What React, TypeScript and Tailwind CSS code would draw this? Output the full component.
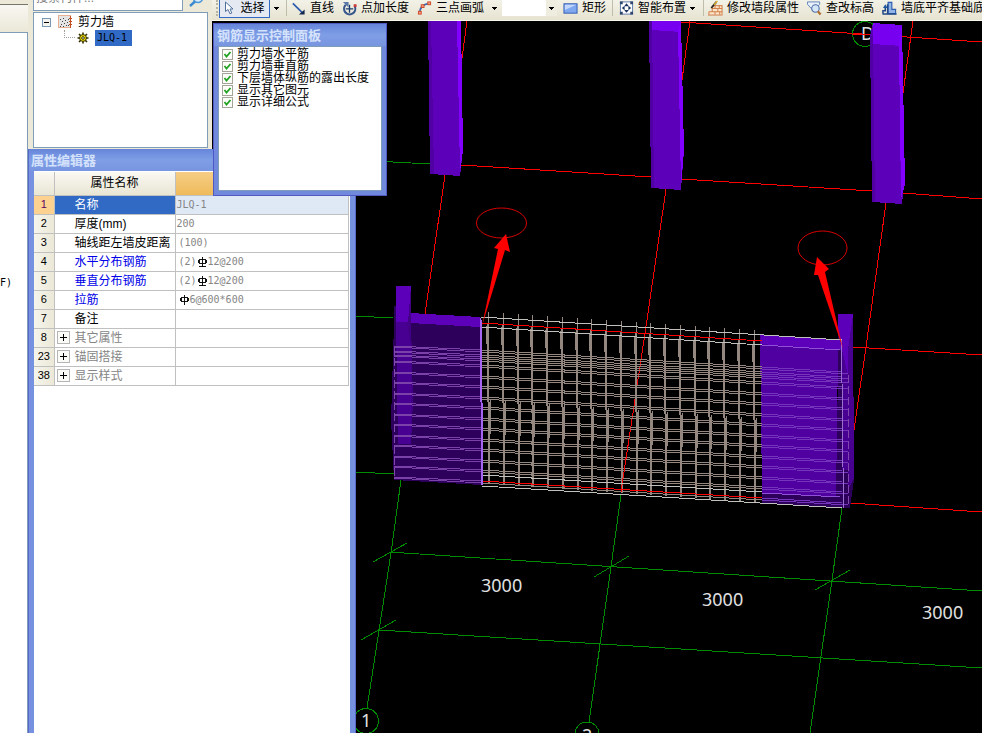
import type { ReactNode } from "react";

const PROPS: { n: number; name: string; value?: string; bar?: "plain" | "ribbed"; count?: string; kind?: "blue" | "group" | "sel" }[] = [
  { n: 1, name: "名称", value: "JLQ-1", kind: "sel" },
  { n: 2, name: "厚度(mm)", value: "200" },
  { n: 3, name: "轴线距左墙皮距离", count: "(100)" },
  { n: 4, name: "水平分布钢筋", count: "(2)", bar: "ribbed", value: "12@200", kind: "blue" },
  { n: 5, name: "垂直分布钢筋", count: "(2)", bar: "ribbed", value: "12@200", kind: "blue" },
  { n: 6, name: "拉筋", bar: "plain", value: "6@600*600", kind: "blue" },
  { n: 7, name: "备注" },
  { n: 8, name: "其它属性", kind: "group" },
  { n: 23, name: "锚固搭接", kind: "group" },
  { n: 38, name: "显示样式", kind: "group" },
];

const OPTIONS = ["剪力墙水平筋", "剪力墙垂直筋", "下层墙体纵筋的露出长度", "显示其它图元", "显示详细公式"];

function Icon({ children }: { children: ReactNode }) {
  return (
    <svg viewBox="0 0 16 16" className="w-[15px] h-4 shrink-0" fill="none">
      {children}
    </svg>
  );
}

function Tool({ icon, label }: { icon: ReactNode; label: string }) {
  return (
    <button type="button" className="h-4 px-1 flex items-center gap-1 shrink-0 whitespace-nowrap">
      <Icon>{icon}</Icon>
      <span>{label}</span>
    </button>
  );
}

function Caret({ className, label }: { className: string; label: string }) {
  return (
    <button type="button" aria-label={label} className={`h-4 flex items-center shrink-0 ${className}`}>
      <svg viewBox="0 0 5 3" className="w-[5px] h-[3px]" shapeRendering="crispEdges">
        <path d="M0 0H5V1H4V2H3V3H2V2H1V1H0Z" fill="#000" />
      </svg>
    </button>
  );
}

function Toolbar() {
  return (
    <header className="h-[21px] shrink-0 flex items-start overflow-hidden bg-linear-to-b from-[#f3f2e8] to-[#e6e3d0] border-b border-[#f8f8ec]">
      <span className="w-[2px] h-4 ml-1 mr-px shrink-0 border-l-2 border-dotted border-[#b8b5a2]" />
      <button type="button" className="h-[18px] w-[51px] pb-0.5 flex items-center justify-center gap-1.5 shrink-0 border border-t-0 border-[#316ac5] bg-[#e5eaf2] whitespace-nowrap">
        <svg viewBox="0 0 10 14" className="w-[10px] h-[14px]">
          <path d="M1.5 1V10.5L4 8.5L6 12.8L7.8 12L6 8H9Z" fill="#fff" stroke="#50709c" />
        </svg>
        <span>选择</span>
      </button>
      <Caret label="选择方式" className="w-4 pl-1" />
      <span className="w-px h-4 shrink-0 bg-[#c0bdaa]" />
      <Tool
        label="直线"
        icon={
          <>
            <path d="M2 3L12 13" stroke="#2c5cae" strokeWidth="1.8" />
            <path d="M14.5 9.5V15H8.5L10.5 13L12.5 11.5Z" fill="#14284c" />
          </>
        }
      />
      <Tool
        label="点加长度"
        icon={
          <>
            <path d="M4 4.5A6 6 0 1 0 13.5 6" stroke="#35558c" strokeWidth="2.2" />
            <path d="M8 4.5V13M4 9H12" stroke="#1c3c70" strokeWidth="1.4" />
            <path d="M1 1.5H7V7.5Z" fill="#5878a8" />
            <rect x="12.5" y="4" width="3" height="3" fill="#c83838" />
          </>
        }
      />
      <Tool
        label="三点画弧"
        icon={
          <>
            <path d="M3 13C3 8 6 4 13 3" stroke="#3468b4" strokeWidth="1.8" />
            <rect x="1.5" y="11.5" width="3" height="3" fill="#f4a080" stroke="#d04828" />
            <rect x="4.5" y="4.5" width="3" height="3" fill="#f4a080" stroke="#d04828" />
            <rect x="11.5" y="1.5" width="3" height="3" fill="#f4a080" stroke="#d04828" />
          </>
        }
      />
      <Caret label="画弧方式" className="w-3 pl-1" />
      <div className="w-[55px] h-4 ml-0.5 shrink-0 flex bg-white">
        <select aria-label="画弧参数" className="flex-1 min-w-0 appearance-none bg-white">
          <option></option>
        </select>
        <span className="w-[11px] bg-[#efeddf] flex items-center justify-center">
          <svg viewBox="0 0 5 3" className="w-[5px] h-[3px]" shapeRendering="crispEdges">
            <path d="M0 0H5V1H4V2H3V3H2V2H1V1H0Z" fill="#000" />
          </svg>
        </span>
      </div>
      <span className="w-0.5 shrink-0" />
      <Tool
        label="矩形"
        icon={
          <>
            <rect x="1" y="3.5" width="14" height="10" fill="#7fa8f0" stroke="#3058b0" />
            <path d="M2 4.5H14L2 10Z" fill="#c4d8fb" />
          </>
        }
      />
      <span className="w-px h-4 mx-0.5 shrink-0 bg-[#c0bdaa]" />
      <Tool
        label="智能布置"
        icon={
          <>
            <rect x="1.5" y="1.5" width="13" height="13" fill="#fff" stroke="#5878a8" />
            <path d="M1 1H4V4H1ZM12 1H15V4H12ZM1 12H4V15H1ZM12 12H15V15H12Z" fill="#304870" />
            <path d="M8 3L10.5 6H5.5ZM8 13L10.5 10H5.5ZM3 8L6 5.5V10.5ZM13 8L10 10.5V5.5Z" fill="#18335f" />
          </>
        }
      />
      <Caret label="布置方式" className="w-3" />
      <span className="w-px h-4 ml-px shrink-0 bg-[#c0bdaa]" />
      <Tool
        label="修改墙段属性"
        icon={
          <>
            <path d="M1 15V11H4V8H7V5H15V15Z" fill="#fbe6cc" />
            <path d="M0 15.5H15.5M1 12H15M4 8.5H15M7 5.5H15M4.5 12V8M7.5 8V5M10.5 9V12M7.5 12V15M12.5 12V15M15 5V15M12 5V8M1 15V12" stroke="#d07840" />
            <path d="M3.5 8L9 1.5" stroke="#302820" strokeWidth="2" />
            <path d="M6.5 4.5L10 0.5" stroke="#e0b030" strokeWidth="1.4" />
          </>
        }
      />
      <Tool
        label="查改标高"
        icon={
          <>
            <path d="M0.5 1.5H13.5V4L10 8H4L0.5 4Z" fill="#e8f0fb" stroke="#6080b4" />
            <circle cx="9" cy="8.5" r="4" fill="#d4e6f8" stroke="#5070a8" strokeWidth="1.2" />
            <path d="M11.5 11.5L14.5 15" stroke="#b07030" strokeWidth="2.4" />
          </>
        }
      />
      <Tool
        label="墙底平齐基础底"
        icon={
          <>
            <path d="M6.5 2H10.5V9.5H14.5V14H6.5Z" fill="#90b4e8" stroke="#2c5cae" strokeWidth="1.2" />
            <path d="M1 14V11H3.5V7M0.5 14.5H15.5M6 14V4" stroke="#204888" strokeWidth="1.6" />
            <path d="M1 8L3.5 4L6 8Z" fill="#2058a0" />
          </>
        }
      />
    </header>
  );
}

function TreePanel() {
  return (
    <div className="flex-1 flex flex-col pl-[5px] pr-1 bg-[#ece9d8]">
      <div className="h-[26px] -mt-[15px] flex shrink-0">
        <input
          type="text"
          aria-label="搜索构件"
          placeholder="搜索构件..."
          className="flex-1 min-w-0 px-0.5 bg-white border border-[#7f9db9] placeholder:text-[#808080]"
        />
        <button type="button" aria-label="搜索" className="w-[25px] shrink-0 pb-1 flex items-end justify-center">
          <svg viewBox="0 0 16 16" className="w-4 h-4" fill="none">
            <circle cx="10" cy="7" r="4.5" fill="#d8ecfb" stroke="#4c9ad8" strokeWidth="1.6" />
            <path d="M7 10.5L2 15" stroke="#3c8ad0" strokeWidth="2.4" />
          </svg>
        </button>
      </div>
      <div className="flex-1 mt-px pl-2 pt-px bg-white border border-[#7f9db9]">
        <div className="h-4 flex items-center">
          <svg viewBox="0 0 9 9" className="w-[9px] h-[9px]" shapeRendering="crispEdges">
            <rect x="0.5" y="0.5" width="8" height="8" fill="#f4f3ee" stroke="#7898b5" />
            <path d="M2 4.5H7" stroke="#000" />
          </svg>
          <svg viewBox="0 0 14 14" className="w-[14px] h-[14px] ml-[7px]" shapeRendering="crispEdges">
            <rect x="0.5" y="0.5" width="12" height="12" fill="#e4e4e4" stroke="#e8b090" />
            <path d="M2 4.5h1M5 3.5h1M4 6.5h1M7 5.5h1M9 7.5h1M3 9.5h1M6 8.5h1M8 10.5h1M5 11.5h1M10 4.5h1M10 10.5h1M2 11.5h1" stroke="#444" />
            <path d="M12.5 1V13M11 3.5H14M11 6.5H14M11 9.5H14" stroke="#c05020" />
          </svg>
          <span className="ml-1.5">剪力墙</span>
        </div>
        <div className="h-4 flex items-center pl-[22px]">
          <span className="w-[11px] h-2 mb-2 border-l border-b border-dotted border-[#a0a0a0]" />
          <svg viewBox="0 0 12 12" className="w-3 h-3 ml-0.5">
            <path d="M6 0.5V11.5M0.5 6H11.5M2 2L10 10M10 2L2 10" stroke="#302c00" strokeWidth="1.6" />
            <circle cx="6" cy="6" r="3.4" fill="#f8e800" stroke="#302c00" />
            <circle cx="6" cy="6" r="1.3" fill="#fff" stroke="#302c00" />
          </svg>
          <span className="w-[37px] h-4 ml-1.5 pl-0.5 flex items-center bg-[#316ac5] text-[10px] font-['DejaVu_Sans_Mono',monospace]">JLQ-1</span>
        </div>
      </div>
    </div>
  );
}

function RebarMark({ ribbed }: { ribbed: boolean }) {
  return (
    <svg viewBox="0 0 12 12" className="w-[11px] h-3 shrink-0" fill="none" stroke="#000" shapeRendering="crispEdges">
      <path d="M2.5 3.5H9.5V7.5H2.5ZM6 1V11" />
      <path d="M1.5 4V7M10.5 4V7" />
      {ribbed && <path d="M2 10.5H10" />}
    </svg>
  );
}

function PropertyEditor() {
  return (
    <section className="absolute z-10 left-7 top-[149px] bottom-0 w-[328px] flex flex-col px-[5px] bg-[#7591e0] border-x border-[#5a68cc]">
      <h2 className="h-[22px] -mx-[5px] pl-0.5 pt-px flex items-center shrink-0 text-[13px] font-bold text-[#d5e2fb] bg-linear-to-b from-[#6685da] via-[#7f9ee6] to-[#7895e0]">
        属性编辑器
      </h2>
      <div className="flex-1 bg-white pr-px pt-px">
        <table className="w-full table-fixed border-collapse">
          <thead>
            <tr className="h-[23px] bg-linear-to-b from-[#faf9f3] to-[#e9e6d4]">
              <th className="w-5 border-r border-b border-[#c0c0c0]"></th>
              <th className="w-[121px] p-0 border-r border-b border-[#c0c0c0] font-normal">属性名称</th>
              <th className="p-0 border-r border-b border-[#c0c0c0] font-normal bg-linear-to-b from-[#f5cd85] to-[#efbb5a]">属性值</th>
            </tr>
          </thead>
          <tbody>
            {PROPS.map((p) => (
              <tr key={p.n} className="h-[19px]">
                <th className={`p-0 border-r border-b border-[#c0c0c0] font-normal text-[11px] leading-none ${p.kind === "sel" ? "bg-[#fdd190] text-[#600060]" : "bg-linear-to-r from-[#f6f5ec] to-[#ebe8d7]"}`}>
                  {p.n}
                </th>
                <td className={`p-0 border-r border-b border-[#c0c0c0] leading-none ${p.kind === "sel" ? "bg-[#316ac5] text-white" : p.kind === "blue" ? "text-[#0000e8]" : p.kind === "group" ? "text-[#858585]" : ""}`}>
                  <div className="flex items-center">
                    <span className="w-5 flex justify-start pl-0.5">
                      {p.kind === "group" && (
                        <button type="button" aria-label={`展开${p.name}`}>
                          <svg viewBox="0 0 13 13" className="block w-[13px] h-[13px]" shapeRendering="crispEdges">
                            <rect x="0.5" y="0.5" width="12" height="12" fill="#fafaf6" stroke="#b5b5b5" />
                            <path d="M3 6.5H10M6.5 3V10" stroke="#000" />
                          </svg>
                        </button>
                      )}
                    </span>
                    <span className="whitespace-nowrap">{p.name}</span>
                  </div>
                </td>
                <td className={`p-0 border-r border-b border-[#c0c0c0] leading-none text-[10px] text-[#858585] font-['DejaVu_Sans_Mono',monospace] ${p.kind === "sel" ? "bg-[#dfe9f6]" : ""}`}>
                  <div className={`flex items-center ${p.count || p.bar ? "pl-[3px]" : "pl-px"}`}>
                    {p.count}
                    {p.bar && <RebarMark ribbed={p.bar === "ribbed"} />}
                    {p.value}
                  </div>
                </td>
              </tr>
            ))}
          </tbody>
        </table>
      </div>
    </section>
  );
}

function DisplayPanel() {
  return (
    <section className="absolute z-20 left-[213px] top-[23px] w-[174px] h-[173px] flex flex-col px-1 pb-1 bg-[#7189dc] border border-[#5058c4]">
      <h2 className="h-[22px] -mx-1 pl-[3px] pt-0.5 flex items-center shrink-0 text-[13px] font-bold text-[#d5e2fb] bg-linear-to-b from-[#6685da] via-[#7f9ee6] to-[#7895e0]">
        钢筋显示控制面板
      </h2>
      <div className="flex-1 pl-[3px] pt-px bg-white border border-[#7f9db9]">
        {OPTIONS.map((o) => (
          <label key={o} className="h-3 flex items-center gap-1 leading-3 whitespace-nowrap">
            <span className="grid shrink-0">
              <input type="checkbox" defaultChecked className="peer [grid-area:1/1] appearance-none w-[11px] h-[11px] m-0 bg-[#fdfdfa] border border-[#a5a498]" />
              <svg viewBox="0 0 11 11" className="[grid-area:1/1] w-[11px] h-[11px] invisible peer-checked:visible pointer-events-none" fill="none">
                <path d="M2.5 5L4.5 7.5L8.5 3" stroke="#21a121" strokeWidth="1.8" />
              </svg>
            </span>
            {o}
          </label>
        ))}
      </div>
    </section>
  );
}

// Axis grid, [x1, y1, x2, y2] in scene units
const GREEN = [
  [355, 160, 430, 164], [355, 316, 393, 318], [355, 472, 394, 474],
  [389, 552, 982, 591], [379, 630, 982, 668],
  [401, 480, 391, 553], [391, 553, 367, 708],
  [621, 495, 611, 567], [611, 567, 589, 722],
  [842, 508, 832, 580], [832, 580, 810, 733],
  [373, 562, 407, 543], [361, 640, 396, 620], [594, 577, 629, 556], [815, 590, 850, 570],
];
const RED = [
  [681, 22, 982, 42], [461, 165, 651, 177], [681, 179, 872, 191], [903, 193, 982, 199],
  [853, 347, 982, 355], [850, 503, 982, 512],
  [467, 21, 461, 66], [445, 175, 425, 314],
  [690, 21, 682, 80], [666, 189, 647, 320], [647, 320, 621, 492],
  [913, 21, 903, 93], [886, 203, 866, 347], [866, 347, 854, 430],
];
const BARS = Array.from({ length: 19 }, (_, i) => i);
const LAYERS = [346, 351, 355, ...Array.from({ length: 12 }, (_, i) => 361 + Math.round(i * 10.5))];

function segments(list: number[][]) {
  return list.map(([a, b, c, d]) => `M${a} ${b}L${c} ${d}`).join("");
}

function Scene() {
  return (
    <svg viewBox="212 21 770 712" preserveAspectRatio="xMinYMin slice" className="block w-full h-full bg-black" fill="none">
      <g shapeRendering="crispEdges">
        <path d={segments(GREEN)} stroke="#008c00" />
        <path d={segments(RED)} stroke="#ff0000" />
        <circle cx="366" cy="721" r="12.5" stroke="#008c00" />
        <circle cx="587" cy="734" r="12" stroke="#008c00" />
        <circle cx="865" cy="34" r="12.5" stroke="#008c00" />
      </g>
      <g className="font-['Noto_Sans',sans-serif] text-[18px]" fill="#e0e0e0">
        <text x="481" y="592">3000</text>
        <text x="702" y="606">3000</text>
        <text x="922" y="619">3000</text>
        <text x="361" y="727">1</text>
        <text x="582" y="742">2</text>
        <text x="861" y="40">D</text>
      </g>

      {/* columns at the back */}
      <g shapeRendering="crispEdges">
        <path d="M852 34H872" stroke="#ff0000" />
        <path d="M428 21H461L463 150L460 176L430 174Z" fill="#5c00ba" />
        <path d="M428 21H431L434 174H430Z" fill="#5000a2" />
        <path d="M457 21H461L463 150L460 172Z" fill="#8200ff" />
        <path d="M650 21H681L684 150L681 190L651 188Z" fill="#5c00ba" />
        <path d="M649 21H652L654 188H651Z" fill="#5000a2" />
        <path d="M652 21H681V32L652 30Z" fill="#7800f0" />
        <path d="M678 31L681 21L684 150L681 186Z" fill="#8200ff" />
        <path d="M870 36L873 23L902 25L904 185L902 204L872 202Z" fill="#5c00ba" />
        <path d="M870 36L873 36L875 202H872Z" fill="#5000a2" />
        <path d="M873 23L902 25V46L873 44Z" fill="#7800f0" />
        <path d="M899 46L902 25L905 184L901 199Z" fill="#8200ff" />
      </g>

      {/* left end of the wall */}
      <g shapeRendering="crispEdges">
        <path d="M395 290L396 322H411V323L480 327L482 485L394 480L391 420Z" fill="#2d005c" />
        <path d="M410 313L480 317V327L410 323Z" fill="#5c00ba" />
        <path d="M411 286L407 322L411 444L413 400L411 322Z" fill="#430086" />
        <path d="M396 322H407L411 350V444H398Z" fill="#480092" />
        <path d="M396 286H411L408 322H396Z" fill="#5c00ba" />
      </g>

      {/* right end */}
      <g shapeRendering="crispEdges">
        <path d="M838 314H853V430L854 480L850 508L762 503V493L838 400Z" fill="#2d005c" />
        <path d="M760 335L841 340L838 350L836 497L762 493Z" fill="#5000a0" />
        <path d="M761 335L841 340V350L761 344Z" fill="#5c00ba" />
        <path d="M838 314H853L848 350V375L842 350L838 330Z" fill="#5c00ba" />
        <path d="M842 350L848 375V470H842Z" fill="#480092" />
        <path d="M853 314L848 350V490L854 478Z" fill="#480090" />
      </g>

      {/* horizontal bars: anchored ends show through the wall body */}
      <g shapeRendering="crispEdges">
        {LAYERS.map((y) => (
          <g key={y}>
            <path d={`M394 ${y}L482 ${y + 4}M394 ${y + 1}L482 ${y + 6}`} stroke="#7a42a8" />
            <path d={`M482 ${y + 4}L762 ${y + 21}M482 ${y + 6}L762 ${y + 23}`} stroke="#94877f" />
            <path d={`M762 ${y + 21}L842 ${y + 26}M762 ${y + 23}L848 ${y + 28}`} stroke="#7434bc" />
          </g>
        ))}
        <path d="M394 347V478M848 375V505" stroke="#8046ae" strokeDasharray="8 3" />
        {BARS.map((i) => {
          const x = 488 + Math.round(i * 14.75);
          const top = 312 + i;
          return (
            <g key={i} stroke="#94877f">
              <path d={`M${x} ${top + 11}V${top + 90}M${x + 1} ${top + 90}V${top + 172}`} strokeWidth="2" />
              <path d={`M${x + 0.5} ${top}V${top + 12}M${x - 1.5} ${top + 14}V${top + 32}M${x + 2.5} ${top + 88}V${top + 122}`} />
            </g>
          );
        })}
        <path d="M482 323L762 341M482 481L762 498" stroke="#ff0000" />
        <path d="M628 445L621 492" stroke="#ff0000" />
        <path d="M481 317L842 340M481 327L762 345M482 475L762 492M482 486L842 508" stroke="#c0c0bc" />
        <path d="M762 345L840 350M762 493L840 497" stroke="#9050d8" />
        <path d="M480.5 318L482.5 485" stroke="#a464f0" strokeWidth="2" />
        <path d="M841.5 340L843.5 508" stroke="#9c70d0" />
      </g>

      {/* callouts */}
      <ellipse cx="501.5" cy="223" rx="25" ry="15" stroke="#d80000" />
      <ellipse cx="822.5" cy="248" rx="24.5" ry="17" stroke="#d80000" />
      <path d="M506 234L494 248L498 249L482 326L505 250L510 252Z" fill="#ff0000" />
      <path d="M817 257L814 275L818 275L843 349L825 272L829 269Z" fill="#ff0000" />
    </svg>
  );
}

export default function App() {
  return (
    <div className="relative h-screen flex overflow-hidden bg-[#ece9d8] text-black text-[12px] leading-4 font-['Liberation_Sans','Noto_Sans_CJK_SC',sans-serif]">
      <aside className="w-[212px] shrink-0 flex overflow-hidden">
        <div className="w-7 shrink-0 flex flex-col">
          <div className="h-[5px] bg-[#ece9d8] border-b border-[#77756a]" />
          <div className="h-[27px] bg-linear-to-b from-[#f8f7f1] to-[#ebe8d8]" />
          <div className="flex-1 pt-[242px] bg-white border-t border-r border-[#7f9db9] text-[10px] font-['DejaVu_Sans_Mono',monospace]">F)</div>
        </div>
        <div className="flex-1 min-w-0 flex flex-col">
          <TreePanel />
          <div className="h-[585px] shrink-0" />
        </div>
      </aside>
      <main className="flex-1 min-w-0 flex flex-col">
        <Toolbar />
        <div className="flex-1 min-h-0">
          <Scene />
        </div>
      </main>
      <PropertyEditor />
      <DisplayPanel />
    </div>
  );
}
